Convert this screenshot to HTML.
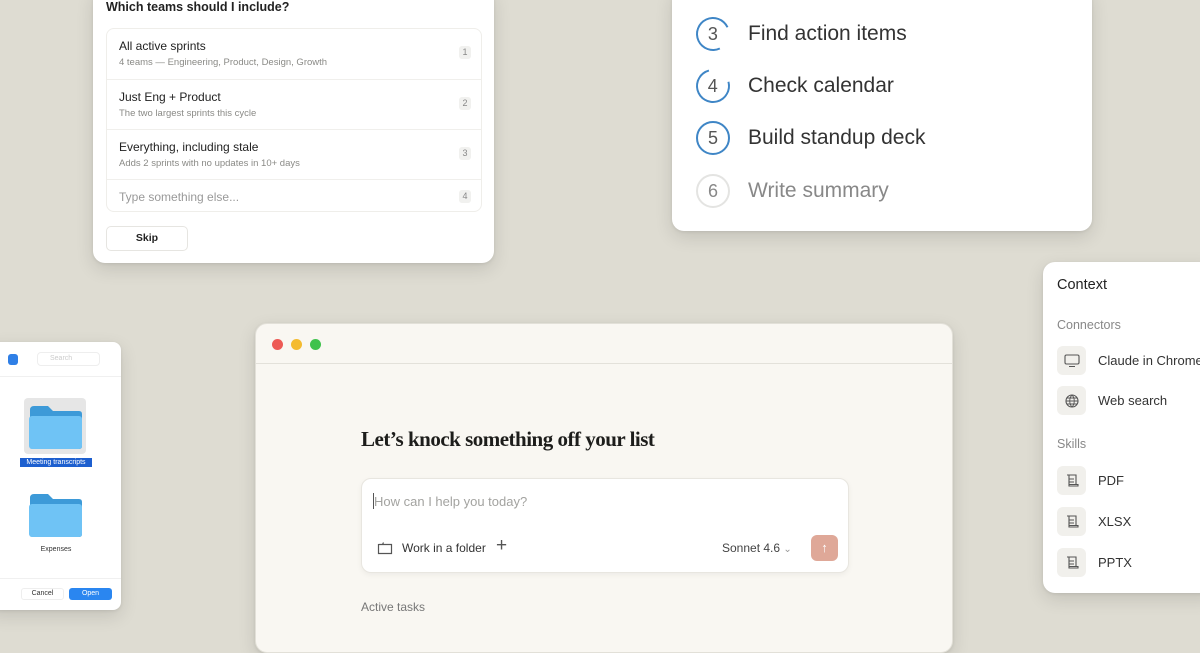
<!DOCTYPE html>
<html><head><meta charset="utf-8"><style>
*{margin:0;padding:0;box-sizing:border-box}
body{width:1200px;height:630px;overflow:hidden;background:#dedcd2;font-family:"Liberation Sans",sans-serif;position:relative;color:#222}
.card{position:absolute;background:#fff;border-radius:12px;box-shadow:0 6px 18px rgba(0,0,0,.12),0 1px 3px rgba(0,0,0,.08)}
.abs{position:absolute}
.row{position:absolute;left:0;right:0;border-top:1px solid #f0efec}
.row .t{position:absolute;left:12px;font-size:12px;color:#222}
.row .s{position:absolute;left:12px;font-size:9.5px;color:#8a8a86}
.row .n{position:absolute;right:10px;width:12px;height:13px;background:#f1f1ef;border-radius:3px;font-size:9px;color:#888;text-align:center;line-height:13px}
.step{position:absolute;left:24px;height:34px;display:flex;align-items:center}
.step .c{width:34px;height:34px;border-radius:50%;border:2.5px solid #3f86c6;font-size:18px;color:#555;display:flex;align-items:center;justify-content:center;margin-right:18px}
.step span{font-size:21px;color:#333}
.ctx{position:absolute;left:14px;display:flex;align-items:center;font-size:13px;color:#333}
.ctx .i{width:29px;height:29px;background:#f1f0ec;border-radius:6px;margin-right:12px;display:flex;align-items:center;justify-content:center}
</style></head><body>

<div class="card" style="left:93px;top:-12px;width:401px;height:275px">
  <div class="abs" style="left:13px;top:12px;font-size:12.5px;font-weight:bold;color:#222">Which teams should I include?</div>
  <div class="abs" style="left:13px;top:40px;width:376px;height:184px;border:1px solid #efeeea;border-radius:8px;overflow:hidden">
    <div class="row" style="top:0;height:50px;border-top:none"><div class="t" style="top:10px">All active sprints</div><div class="s" style="top:28px">4 teams — Engineering, Product, Design, Growth</div><div class="n" style="top:17px">1</div></div>
    <div class="row" style="top:50px;height:50px"><div class="t" style="top:10px">Just Eng + Product</div><div class="s" style="top:28px">The two largest sprints this cycle</div><div class="n" style="top:17px">2</div></div>
    <div class="row" style="top:100px;height:50px"><div class="t" style="top:10px">Everything, including stale</div><div class="s" style="top:28px">Adds 2 sprints with no updates in 10+ days</div><div class="n" style="top:17px">3</div></div>
    <div class="row" style="top:150px;height:34px"><div class="t" style="top:10px;color:#999">Type something else...</div><div class="n" style="top:10px">4</div></div>
  </div>
  <div class="abs" style="left:13px;top:238px;width:82px;height:25px;border:1px solid #e6e5e1;border-radius:5px;font-size:10.5px;font-weight:bold;text-align:center;line-height:23px">Skip</div>
</div>

<div class="card" style="left:672px;top:-12px;width:420px;height:243px">
  <div class="step" style="top:29px"><div class="c" style="border-right-color:transparent;transform:rotate(20deg)"><b style="font-weight:normal;transform:rotate(-20deg)">3</b></div><span>Find action items</span></div>
  <div class="step" style="top:81px"><div class="c" style="border-top-color:transparent;transform:rotate(30deg)"><b style="font-weight:normal;transform:rotate(-30deg)">4</b></div><span>Check calendar</span></div>
  <div class="step" style="top:133px"><div class="c">5</div><span>Build standup deck</span></div>
  <div class="step" style="top:186px"><div class="c" style="border-color:#e4e4e2;color:#888">6</div><span style="color:#888">Write summary</span></div>
</div>

<div class="card" style="left:-12px;top:342px;width:133px;height:268px;border-radius:8px">
  <div class="abs" style="left:20px;top:12px;width:10px;height:11px;background:#2f7fe6;border-radius:3px"></div>
  <div class="abs" style="left:49px;top:10px;width:63px;height:14px;border:1px solid #eee;border-radius:4px;font-size:7px;color:#ccc;line-height:12px;padding-left:12px">Search</div>
  <div class="abs" style="left:0;right:0;top:34px;border-top:1px solid #f0f0f0"></div>
  <div class="abs" style="left:36px;top:56px;width:62px;height:56px;background:#e6e6e6;border-radius:4px"></div>
  <svg class="abs" style="left:40px;top:62px" width="55" height="46"><path d="M2 6 q0-4 4-4 h14 l5 5 h26 q3 0 3 3 v32 q0 3-3 3 h-46 q-3 0-3-3z" fill="#3d9ad8"/><rect x="1" y="12" width="53" height="33" rx="3" fill="#6fc3f5"/></svg>
  <div class="abs" style="left:32px;top:116px;width:72px;height:9px;background:#1d5fcf;color:#fff;font-size:7px;text-align:center;line-height:9px">Meeting transcripts</div>
  <svg class="abs" style="left:40px;top:150px" width="55" height="46"><path d="M2 6 q0-4 4-4 h14 l5 5 h26 q3 0 3 3 v32 q0 3-3 3 h-46 q-3 0-3-3z" fill="#3d9ad8"/><rect x="1" y="12" width="53" height="33" rx="3" fill="#6fc3f5"/></svg>
  <div class="abs" style="left:32px;top:204px;width:72px;font-size:7px;text-align:center;color:#333">Expenses</div>
  <div class="abs" style="left:0;right:0;top:236px;border-top:1px solid #f0f0f0"></div>
  <div class="abs" style="left:33px;top:246px;width:43px;height:12px;border:1px solid #eee;border-radius:3px;font-size:7px;text-align:center;line-height:10px;color:#333">Cancel</div>
  <div class="abs" style="left:81px;top:246px;width:43px;height:12px;background:#2a86f0;border-radius:3px;font-size:7px;text-align:center;line-height:12px;color:#fff">Open</div>
</div>

<div class="card" style="left:255px;top:323px;width:698px;height:330px;background:#f9f7f2;border:1px solid #e2e0d8">
  <div class="abs" style="left:16px;top:15px;width:11px;height:11px;border-radius:50%;background:#ed5a55"></div>
  <div class="abs" style="left:35px;top:15px;width:11px;height:11px;border-radius:50%;background:#f4bb2f"></div>
  <div class="abs" style="left:54px;top:15px;width:11px;height:11px;border-radius:50%;background:#3fc24c"></div>
  <div class="abs" style="left:0;right:0;top:39px;border-top:1px solid #e3e1da"></div>
  <div class="abs" style="left:105px;top:103px;font-family:'Liberation Serif',serif;font-weight:bold;font-size:21px;letter-spacing:-0.5px;color:#1d1d1b">Let’s knock something off your list</div>
  <div class="abs" style="left:105px;top:154px;width:488px;height:95px;background:#fff;border:1px solid #e8e6e0;border-radius:10px;box-shadow:0 2px 6px rgba(0,0,0,.05)">
    <div class="abs" style="left:11px;top:14px;width:1px;height:16px;background:#555"></div>
    <div class="abs" style="left:12px;top:15px;font-size:13px;color:#a3a3a0">How can I help you today?</div>
    <svg class="abs" style="left:15px;top:62px" width="16" height="14"><path d="M1.5 3.5 h4 l1-2 h0 M1.5 3 v9.5 h13 v-9 h-13" fill="none" stroke="#555" stroke-width="1.2"/></svg>
    <div class="abs" style="left:40px;top:62px;font-size:12px;color:#333">Work in a folder</div>
    <div class="abs" style="left:134px;top:56px;font-size:19px;color:#555;font-weight:300">+</div>
    <div class="abs" style="left:360px;top:62px;font-size:12px;color:#444">Sonnet 4.6 <span style="font-size:10px;color:#999">⌄</span></div>
    <div class="abs" style="left:449px;top:56px;width:27px;height:26px;background:#dfa898;border-radius:6px;color:#fff;font-size:13px;text-align:center;line-height:26px">↑</div>
  </div>
  <div class="abs" style="left:105px;top:276px;font-size:12px;color:#777">Active tasks</div>
</div>

<div class="card" style="left:1043px;top:262px;width:175px;height:331px">
  <div class="abs" style="left:14px;top:15px;font-size:14.5px;color:#222">Context</div>
  <div class="abs" style="left:14px;top:56px;font-size:12.5px;color:#888">Connectors</div>
  <div class="ctx" style="top:84px"><div class="i"><svg width="16" height="14"><rect x="1" y="1" width="14" height="9" rx="1.5" fill="none" stroke="#555" stroke-width="1.1"/><path d="M5 12.5 h6" stroke="#555"/></svg></div>Claude in Chrome</div>
  <div class="ctx" style="top:124px"><div class="i"><svg width="16" height="16"><circle cx="8" cy="8" r="6" fill="none" stroke="#555" stroke-width="1.1"/><path d="M2 8h12M8 2c-3 3-3 9 0 12M8 2c3 3 3 9 0 12M3 5h10M3 11h10" fill="none" stroke="#555" stroke-width=".9"/></svg></div>Web search</div>
  <div class="abs" style="left:14px;top:175px;font-size:12.5px;color:#888">Skills</div>
  <div class="ctx" style="top:204px"><div class="i"><svg width="16" height="16"><path d="M3 2h9v10M5 2v11h9v-1.5h-9M5 6h5M5 9h5" fill="none" stroke="#555" stroke-width="1.1"/></svg></div>PDF</div>
  <div class="ctx" style="top:245px"><div class="i"><svg width="16" height="16"><path d="M3 2h9v10M5 2v11h9v-1.5h-9M5 6h5M5 9h5" fill="none" stroke="#555" stroke-width="1.1"/></svg></div>XLSX</div>
  <div class="ctx" style="top:286px"><div class="i"><svg width="16" height="16"><path d="M3 2h9v10M5 2v11h9v-1.5h-9M5 6h5M5 9h5" fill="none" stroke="#555" stroke-width="1.1"/></svg></div>PPTX</div>
</div>
</body></html>
